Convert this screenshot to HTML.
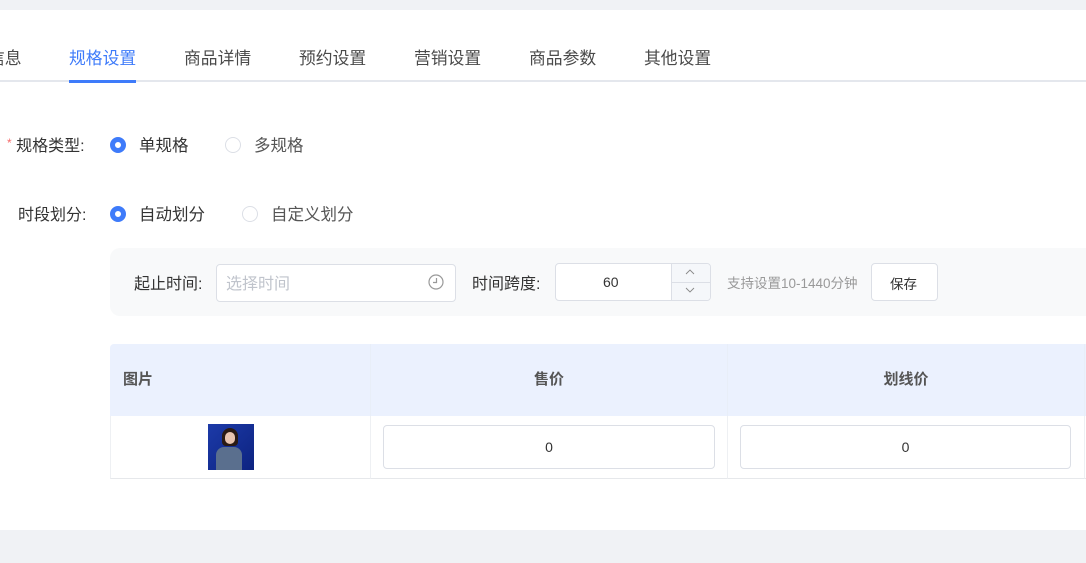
<!DOCTYPE html>
<html><head><meta charset="utf-8"><style>
*{margin:0;padding:0;box-sizing:border-box}
body{width:1086px;height:563px;overflow:hidden;background:#f0f2f5;font-family:"Liberation Sans","Noto Sans CJK SC",sans-serif;position:relative;color:#333}
.a{position:absolute}
.card{left:0;top:10px;width:1086px;height:520px;background:#fff}
.tab{top:45px;font-size:16.8px;color:#4a4a4a;white-space:nowrap}
.lbl{font-size:16px;color:#333;white-space:nowrap}
.radio{width:16px;height:16px;border-radius:50%;border:1px solid #dcdfe6;background:#fff}
.radio.on{border:5px solid #3e7bfa}
.inp{background:#fff;border:1px solid #dcdfe6;border-radius:4px}
.th{top:344px;height:72px;background:#ebf1fe;border-right:1px solid #e8eef8;font-weight:bold;font-size:15px;color:#555;line-height:72px}
.td{top:416px;height:63px;border-right:1px solid #eef0f3;border-bottom:1px solid #e6e8eb}
</style></head><body>
<div class="a card"></div>
<div class="a" style="left:0;top:80px;width:1086px;height:2px;background:#e4e7ed"></div>
<div class="a" style="left:69px;top:80px;width:67px;height:3px;background:#3e7bfa"></div>
<div class="a tab" style="left:-12px">信息</div>
<div class="a tab" style="left:69px;color:#3e7bfa">规格设置</div>
<div class="a tab" style="left:184px">商品详情</div>
<div class="a tab" style="left:299px">预约设置</div>
<div class="a tab" style="left:414px">营销设置</div>
<div class="a tab" style="left:529px">商品参数</div>
<div class="a tab" style="left:644px">其他设置</div>

<div class="a lbl" style="left:7px;top:132px"><span style="color:#f56c6c;font-size:12px;vertical-align:4px">*</span> 规格类型:</div>
<div class="a radio on" style="left:110px;top:137px"></div>
<div class="a lbl" style="left:139px;top:132px;font-size:16.5px">单规格</div>
<div class="a radio" style="left:225px;top:137px"></div>
<div class="a lbl" style="left:254px;top:132px;font-size:16.5px;color:#555">多规格</div>

<div class="a lbl" style="left:18px;top:201px">时段划分:</div>
<div class="a radio on" style="left:110px;top:206px"></div>
<div class="a lbl" style="left:139px;top:201px;font-size:16.5px">自动划分</div>
<div class="a radio" style="left:242px;top:206px"></div>
<div class="a lbl" style="left:271px;top:201px;font-size:16.5px;color:#555">自定义划分</div>

<div class="a" style="left:110px;top:248px;width:990px;height:68px;background:#f8f9fa;border-radius:10px"></div>
<div class="a lbl" style="left:134px;top:270px">起止时间:</div>
<div class="a inp" style="left:216px;top:264px;width:240px;height:38px"></div>
<div class="a lbl" style="left:226px;top:270px;color:#c0c4cc;font-size:16px">选择时间</div>
<svg class="a" style="left:428px;top:274px" width="16" height="16" viewBox="0 0 16 16"><circle cx="8" cy="8" r="7" fill="none" stroke="#999" stroke-width="1.2"/><path d="M8.5 4v4.5H5" fill="none" stroke="#999" stroke-width="1.2"/></svg>
<div class="a lbl" style="left:472px;top:270px">时间跨度:</div>
<div class="a inp" style="left:555px;top:263px;width:156px;height:38px"></div>
<div class="a" style="left:671px;top:264px;width:39px;height:36px;border-left:1px solid #dcdfe6;background:#f5f7fa;border-radius:0 4px 4px 0"></div>
<div class="a" style="left:671px;top:282px;width:39px;height:1px;background:#dcdfe6"></div>
<svg class="a" style="left:685px;top:268px" width="10" height="30" viewBox="0 0 10 30"><path d="M1 6l4-4 4 4M1 20l4 4 4-4" fill="none" stroke="#888" stroke-width="0.9"/></svg>
<div class="a lbl" style="left:603px;top:274px;font-size:14px">60</div>
<div class="a lbl" style="left:727px;top:272px;font-size:13.5px;color:#999">支持设置10-1440分钟</div>
<div class="a inp" style="left:871px;top:263px;width:67px;height:38px"></div>
<div class="a lbl" style="left:890px;top:273px;font-size:13.5px">保存</div>

<div class="a th" style="left:110px;width:261px;padding-left:13px;border-radius:4px 0 0 0">图片</div>
<div class="a th" style="left:371px;width:357px;text-align:center">售价</div>
<div class="a th" style="left:728px;width:357px;text-align:center">划线价</div>
<div class="a th" style="left:1085px;width:10px"></div>
<div class="a td" style="left:110px;width:261px;border-left:1px solid #eef0f3"></div>
<div class="a td" style="left:371px;width:357px"></div>
<div class="a td" style="left:728px;width:357px"></div>
<div class="a td" style="left:1085px;width:10px"></div>
<div class="a" style="left:208px;top:424px;width:46px;height:46px;background:linear-gradient(135deg,#1c3aa8,#0d2380)"></div>
<div class="a" style="left:222px;top:428px;width:16px;height:18px;border-radius:8px 8px 4px 4px;background:#2a1a14"></div>
<div class="a" style="left:225px;top:432px;width:10px;height:12px;border-radius:5px;background:#e8c4b0"></div>
<div class="a" style="left:216px;top:447px;width:26px;height:23px;border-radius:8px 8px 0 0;background:#5a6f8e"></div>
<div class="a inp" style="left:383px;top:425px;width:332px;height:44px;text-align:center;line-height:42px;font-size:14px">0</div>
<div class="a inp" style="left:740px;top:425px;width:331px;height:44px;text-align:center;line-height:42px;font-size:14px">0</div>
</body></html>
